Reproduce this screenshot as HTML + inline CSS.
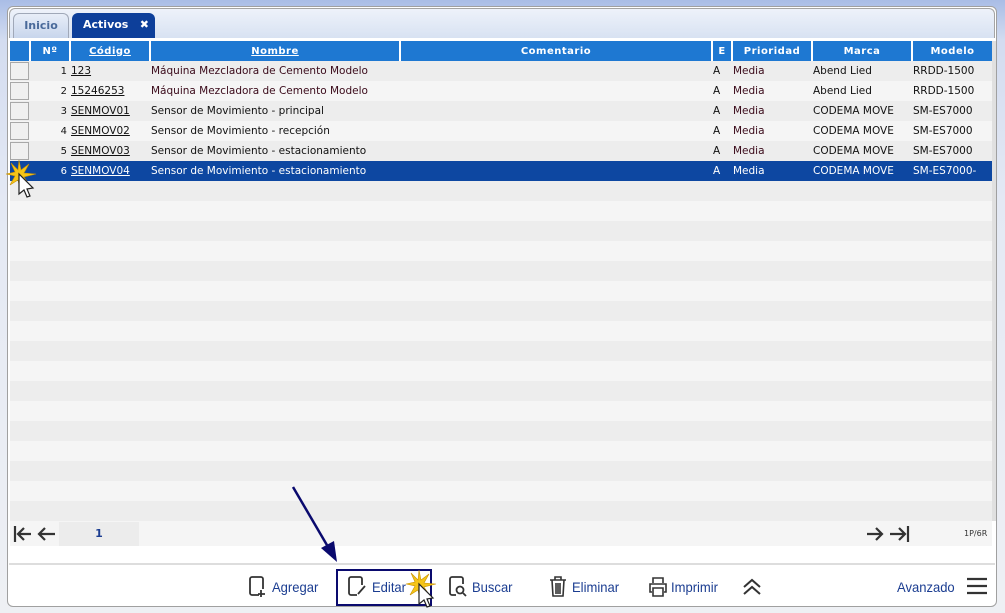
<!DOCTYPE html>
<html><head><meta charset="utf-8"><style>
*{margin:0;padding:0;box-sizing:border-box}
body{width:1005px;height:613px;overflow:hidden;position:relative;background:linear-gradient(#a9bde6 0px,#d3dcf0 40px,#e4e9f4 200px,#eef0f4 613px);font-family:"DejaVu Sans","Liberation Sans",sans-serif;font-size:11px;color:#111}
.abs{position:absolute}
#panel{left:7px;top:6px;width:990px;height:601px;background:#fff;border:1px solid #a0a0a0;border-radius:6px}
#tabbar{left:9px;top:8px;width:986px;height:30px;background:linear-gradient(#eef2fa,#d8e2f2);border:1px solid #a4a4a4;border-radius:6px 6px 0 0;border-bottom:none}
.tab{top:13px;height:25px;border-radius:6px 6px 0 0;font-weight:bold;font-size:11px;line-height:24px}
table{position:absolute;left:10px;top:41px;border-collapse:collapse;table-layout:fixed;width:982px}
td,th{height:20px;padding:0 1px;white-space:nowrap;overflow:hidden;font-size:10.5px}
th{background:#1e78d2;color:#fff;font-size:10px;font-weight:bold;letter-spacing:.5px;border-left:2px solid #fff}
tr.o td{background:#ededed}tr.e td{background:#f5f5f5}
tr.s td{background:#0d47a1;color:#fff}
td.n{text-align:right;padding-right:3px;font-size:10px}
td u{color:#111}
tr.s td u{color:#fff}
.nm{color:#3a0a1a}
tr.s .nm{color:#fff}
.cb{display:block;width:19px;height:18px;border:1px solid #a8a8a8;background:#f0f0f0;margin-left:-1px}
.tb{top:578px;font-size:12.5px;color:#1b3d91;line-height:18px;font-family:"Liberation Sans",sans-serif;font-size:14px;transform:scaleX(.93);transform-origin:left}
</style></head><body>
<div id="panel" class="abs"></div>
<div id="tabbar" class="abs"></div>
<div class="abs tab" style="left:13px;width:56px;background:linear-gradient(#e8eef8,#c8d6ec);border:1px solid #a0a8b8;border-bottom:none;color:#4a6a9a;text-align:center">Inicio</div>
<div class="abs tab" style="left:72px;width:83px;background:#0d3f9a;color:#fff;padding-left:11px">Activos<span style="position:absolute;right:6px">✖</span></div>
<table>
<colgroup><col style="width:20px"><col style="width:40px"><col style="width:80px"><col style="width:250px"><col style="width:312px"><col style="width:20px"><col style="width:80px"><col style="width:100px"><col style="width:80px"></colgroup>
<tr><th style="border-left:none"></th><th>Nº</th><th><u>Código</u></th><th><u>Nombre</u></th><th>Comentario</th><th>E</th><th>Prioridad</th><th>Marca</th><th>Modelo</th></tr>
<tr class="o"><td><span class="cb"></span></td><td class="n">1</td><td><u>123</u></td><td class="nm">Máquina Mezcladora de Cemento Modelo</td><td></td><td>A</td><td class="nm">Media</td><td>Abend Lied</td><td>RRDD-1500</td></tr>
<tr class="e"><td><span class="cb"></span></td><td class="n">2</td><td><u>15246253</u></td><td class="nm">Máquina Mezcladora de Cemento Modelo</td><td></td><td>A</td><td class="nm">Media</td><td>Abend Lied</td><td>RRDD-1500</td></tr>
<tr class="o"><td><span class="cb"></span></td><td class="n">3</td><td><u>SENMOV01</u></td><td>Sensor de Movimiento - principal</td><td></td><td>A</td><td class="nm">Media</td><td>CODEMA MOVE</td><td>SM-ES7000</td></tr>
<tr class="e"><td><span class="cb"></span></td><td class="n">4</td><td><u>SENMOV02</u></td><td>Sensor de Movimiento - recepción</td><td></td><td>A</td><td class="nm">Media</td><td>CODEMA MOVE</td><td>SM-ES7000</td></tr>
<tr class="o"><td><span class="cb"></span></td><td class="n">5</td><td><u>SENMOV03</u></td><td>Sensor de Movimiento - estacionamiento</td><td></td><td>A</td><td class="nm">Media</td><td>CODEMA MOVE</td><td>SM-ES7000</td></tr>
<tr class="s"><td></td><td class="n">6</td><td><u>SENMOV04</u></td><td>Sensor de Movimiento - estacionamiento</td><td></td><td>A</td><td>Media</td><td>CODEMA MOVE</td><td>SM-ES7000-</td></tr>
<tr class="o"><td colspan="9"></td></tr><tr class="e"><td colspan="9"></td></tr><tr class="o"><td colspan="9"></td></tr><tr class="e"><td colspan="9"></td></tr><tr class="o"><td colspan="9"></td></tr><tr class="e"><td colspan="9"></td></tr><tr class="o"><td colspan="9"></td></tr><tr class="e"><td colspan="9"></td></tr><tr class="o"><td colspan="9"></td></tr><tr class="e"><td colspan="9"></td></tr><tr class="o"><td colspan="9"></td></tr><tr class="e"><td colspan="9"></td></tr><tr class="o"><td colspan="9"></td></tr><tr class="e"><td colspan="9"></td></tr><tr class="o"><td colspan="9"></td></tr><tr class="e"><td colspan="9"></td></tr><tr class="o"><td colspan="9"></td></tr>
</table>
<div class="abs" style="left:992px;top:41px;width:4px;height:480px;background:#e0e0e0"></div>
<div class="abs" style="left:10px;top:521px;width:982px;height:25px;background:#f5f5f5"></div>
<div class="abs" style="left:59px;top:522px;width:80px;height:24px;background:#ececec;text-align:center;line-height:24px;font-size:11px;font-weight:bold;color:#1b3d91">1</div>
<svg class="abs" style="left:12px;top:524px" width="48" height="20" fill="none" stroke="#333" stroke-width="2.2"><path d="M3 2v16M19 10H6M12 4l-6 6 6 6"/><path d="M43 10H27M33 4l-6 6 6 6"/></svg>
<svg class="abs" style="left:864px;top:524px" width="48" height="20" fill="none" stroke="#333" stroke-width="2.2"><path d="M3 10h15M12 4l6 6-6 6"/><path d="M26 10h15M35 4l6 6-6 6M44 2v16"/></svg>
<div class="abs" style="left:964px;top:529px;font-size:8px;color:#333">1P/6R</div>
<div class="abs" style="left:9px;top:563px;width:986px;height:2px;background:#ddd"></div>
<svg class="abs" style="left:285px;top:482px" width="70" height="85"><path d="M8 5L46 70" stroke="#0a0a6e" stroke-width="2.5"/><path d="M36 66L52 80L49 59Z" fill="#0a0a6e"/></svg>
<svg class="abs" style="left:248px;top:576px" width="20" height="22" fill="none" stroke="#333" stroke-width="1.8"><path d="M11 19H4a2 2 0 0 1-2-2V3a2 2 0 0 1 2-2h9a2 2 0 0 1 2 2v10M13 14v7M10 18h7"/></svg>
<div class="abs tb" style="left:272px">Agregar</div>
<div class="abs" style="left:336px;top:569px;width:96px;height:37px;border:2px solid #0a0a6e"></div>
<svg class="abs" style="left:347px;top:576px" width="22" height="22" fill="none" stroke="#333" stroke-width="1.8"><path d="M10 19H4a2 2 0 0 1-2-2V3a2 2 0 0 1 2-2h9a2 2 0 0 1 2 2v6M11 18l7-8"/></svg>
<div class="abs tb" style="left:372px">Editar</div>
<svg class="abs" style="left:448px;top:576px" width="22" height="22" fill="none" stroke="#333" stroke-width="1.8"><path d="M8 19H4a2 2 0 0 1-2-2V3a2 2 0 0 1 2-2h9a2 2 0 0 1 2 2v5"/><circle cx="12" cy="14" r="3.5"/><path d="M15 17l3 3"/></svg>
<div class="abs tb" style="left:472px">Buscar</div>
<svg class="abs" style="left:549px;top:576px" width="18" height="22" fill="none" stroke="#333" stroke-width="1.6"><path d="M1 4h16M6 4V1h6v3M3 4l1 16h10l1-16M7 7v11M9 7v11M11 7v11"/></svg>
<div class="abs tb" style="left:572px">Eliminar</div>
<svg class="abs" style="left:648px;top:577px" width="20" height="20" fill="none" stroke="#333" stroke-width="1.6"><path d="M5 6V1h10v5M4 15H2V7h16v8h-2M5 11h10v8H5z"/></svg>
<div class="abs tb" style="left:671px">Imprimir</div>
<svg class="abs" style="left:741px;top:578px" width="22" height="18" fill="none" stroke="#333" stroke-width="2"><path d="M3 9l8-7 8 7M3 16l8-7 8 7"/></svg>
<div class="abs tb" style="left:897px">Avanzado</div>
<svg class="abs" style="left:966px;top:577px" width="22" height="18" stroke="#333" stroke-width="2.2"><path d="M1 2h20M1 9h20M1 16h20"/></svg>
<svg class="abs" style="left:5px;top:158px" width="40" height="45"><path d="M14 2l2 10 8-6-5 9 12 1-12 3 6 9-8-6-2 10-2-10-8 5 5-9-9-2 9-2-4-9 7 7z" fill="#f5c518" stroke="#c89000" stroke-width=".6"/><path d="M14 16v20l5-4 3 7 3-1-3-7 6-1z" fill="#fff" stroke="#222" stroke-width="1.2"/></svg>
<svg class="abs" style="left:405px;top:568px" width="40" height="45"><path d="M14 2l2 10 8-6-5 9 12 1-12 3 6 9-8-6-2 10-2-10-8 5 5-9-9-2 9-2-4-9 7 7z" fill="#f5c518" stroke="#c89000" stroke-width=".6"/><path d="M14 16v20l5-4 3 7 3-1-3-7 6-1z" fill="#fff" stroke="#222" stroke-width="1.2"/></svg>
</body></html>
